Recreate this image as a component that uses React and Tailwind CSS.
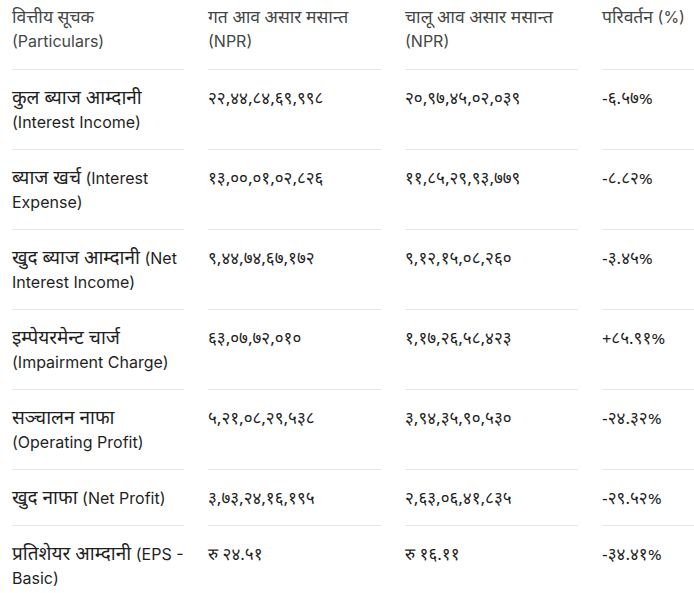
import React from 'react'

// each cell: [devanagari part, latin part]
const headers = [
  [['वित्तीय सूचक', ''], ['', '(Particulars)']],
  [['गत आव असार मसान्त', ''], ['', '(NPR)']],
  [['चालू आव असार मसान्त', ''], ['', '(NPR)']],
  [['परिवर्तन', ' (%)']],
]

const rows = [
  [['कुल ब्याज आम्दानी', ' (Interest Income)'], '२२,४४,८४,६९,९९८', '२०,९७,४५,०२,०३९', '-६.५७%'],
  [['ब्याज खर्च', ' (Interest Expense)'], '१३,००,०१,०२,८२६', '११,८५,२९,९३,७७९', '-८.८२%'],
  [['खुद ब्याज आम्दानी', ' (Net Interest Income)'], '९,४४,७४,६७,१७२', '९,१२,१५,०८,२६०', '-३.४५%'],
  [['इम्पेयरमेन्ट चार्ज', ' (Impairment Charge)'], '६३,०७,७२,०१०', '१,१७,२६,५८,४२३', '+८५.९१%'],
  [['सञ्चालन नाफा', ' (Operating Profit)'], '५,२१,०८,२९,५३८', '३,९४,३५,९०,५३०', '-२४.३२%'],
  [['खुद नाफा', ' (Net Profit)'], '३,७३,२४,१६,१९५', '२,६३,०६,४१,८३५', '-२९.५२%'],
  [['प्रतिशेयर आम्दानी', ' (EPS - Basic)'], 'रु २४.५१', 'रु १६.११', '-३४.४१%'],
]

const latin = { fontFamily: 'Inter, Roboto, sans-serif' }
const deva = { fontFamily: '"Noto Sans Devanagari", "Noto Sans", sans-serif' }

const Deva = ({ className, children }) => (
  <span className={'leading-[10px] ' + className} style={deva}>
    {children}
  </span>
)

export default function App() {
  return (
    <div className="w-[694px] h-[593px] overflow-hidden bg-white" style={latin}>
      <div className="pl-3 pt-[5px]">
        <div className="grid grid-cols-[172px_173px_173px_173px] gap-x-6 text-base leading-6">
          {headers.map((h, i) => (
            <div key={i} className="pb-4 border-b border-[#e6e6e6] text-[#444746]">
              {h.map(([d, e], j) => (
                <div key={j} className="h-6">
                  {d && <Deva className="text-[17.5px]">{d}</Deva>}
                  {e}
                </div>
              ))}
            </div>
          ))}
          {rows.map((r, i) =>
            r.map((cell, j) => (
              <div
                key={i + '-' + j}
                className={
                  'pt-4 pb-[15px] text-[#1f1f1f] ' +
                  (i < rows.length - 1 ? 'border-b border-[#e6e6e6]' : '')
                }
              >
                {Array.isArray(cell) ? (
                  <>
                    <Deva className="text-[19px]">{cell[0]}</Deva>
                    {cell[1]}
                  </>
                ) : (
                  <Deva className="text-[17px]">{cell}</Deva>
                )}
              </div>
            ))
          )}
        </div>
      </div>
    </div>
  )
}
